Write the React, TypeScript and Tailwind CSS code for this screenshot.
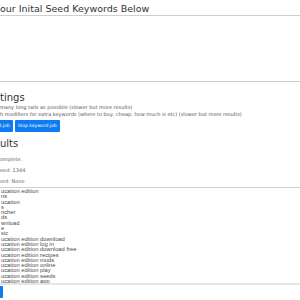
const keywords = [
  'ucation edition',
  'ns',
  'ucation',
  's',
  'ncher',
  'ds',
  'wnload',
  'e',
  'sic',
  'ucation edition download',
  'ucation edition log in',
  'ucation edition download free',
  'ucation edition recipes',
  'ucation edition mods',
  'ucation edition online',
  'ucation edition play',
  'ucation edition seeds',
  'ucation edition app',
  'ucation edition download pc',
];

export default function App() {
  return (
    <div className="w-[300px] h-[300px] overflow-hidden bg-white font-['DejaVu_Sans',sans-serif] text-[#444]">
      <h3 className="pt-[3px] text-[9.5px] leading-[12px] font-medium text-[#333]">our Inital Seed Keywords Below</h3>
      <textarea className="block -ml-2 w-[320px] h-[67px] border border-[#cfcfcf] resize-none bg-white" />

      <h2 className="mt-[10px] text-[10px] leading-[12px] font-medium text-[#333]">tings</h2>
      <div className="text-[5px] leading-[7px] text-[#555]">
        <p>many long tails as possible (slower but more results)</p>
        <p>h modifiers for extra keywords (where to buy, cheap, how much is etc) (slower but more results)</p>
      </div>
      <div className="mt-[2px] flex gap-[2px]">
        <button className="-ml-[33px] h-[12px] px-[3px] rounded-[1px] bg-[#0d7bf2] text-white text-[4.5px] leading-none whitespace-nowrap">Start keyword job</button>
        <button className="h-[12px] px-[3px] rounded-[1px] bg-[#0d7bf2] text-white text-[4.5px] leading-none whitespace-nowrap">Stop keyword job</button>
      </div>

      <h2 className="mt-[6px] text-[10px] leading-[12px] font-medium text-[#333]">ults</h2>
      <div className="mt-[4px] text-[5px] leading-[11px] text-[#666]">
        <p>omplete.</p>
        <p>eed: 1344</p>
        <p>ord: None</p>
      </div>
      <textarea
        readOnly
        value={keywords.join('\n')}
        className="block -ml-2 pl-2 pt-px w-[320px] h-[98px] border border-[#cfcfcf] border-b-2 border-b-[#e6e6e6] resize-none overflow-hidden font-['Liberation_Sans',sans-serif] text-[5.8px] leading-[5.3px] text-[#4a4a4a]"
      />
      <div className="mt-[1px] flex">
        <button className="-ml-[20px] w-[23px] h-[12px] rounded-[1px] bg-[#0d7bf2]" />
      </div>
    </div>
  );
}
